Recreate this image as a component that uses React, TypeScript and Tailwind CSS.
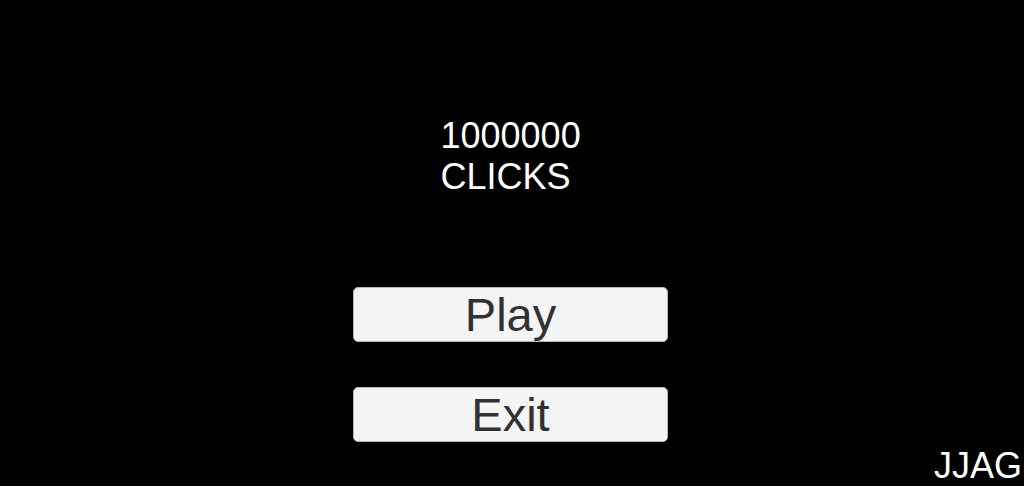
export default function App() {
  return (
    <div
      className="relative flex h-[486px] w-full flex-col bg-black pr-[3px]"
      style={{ fontFamily: '"Liberation Sans", Arial, sans-serif' }}
    >
      {/* Score readout */}
      <div className="mx-auto mt-[115px] w-[140px] text-left text-[36px] leading-[41px] text-white">
        <div>1000000</div>
        <div>CLICKS</div>
      </div>

      {/* Menu buttons */}
      <div className="mt-[90px] flex flex-col items-center gap-[45px]">
        <button className="h-[55px] w-[315px] rounded-[5px] border border-[#b4b4b4] bg-[#f4f4f4] text-[47px] leading-[51px] text-[#323232]">
          Play
        </button>
        <button className="h-[55px] w-[315px] rounded-[5px] border border-[#b4b4b4] bg-[#f4f4f4] text-[47px] leading-[51px] text-[#323232]">
          Exit
        </button>
      </div>

      {/* Credit tag */}
      <div className="mt-auto mr-[-1px] self-end pb-[2px] text-[36px] leading-[36px] text-white">
        JJAG
      </div>
    </div>
  );
}
